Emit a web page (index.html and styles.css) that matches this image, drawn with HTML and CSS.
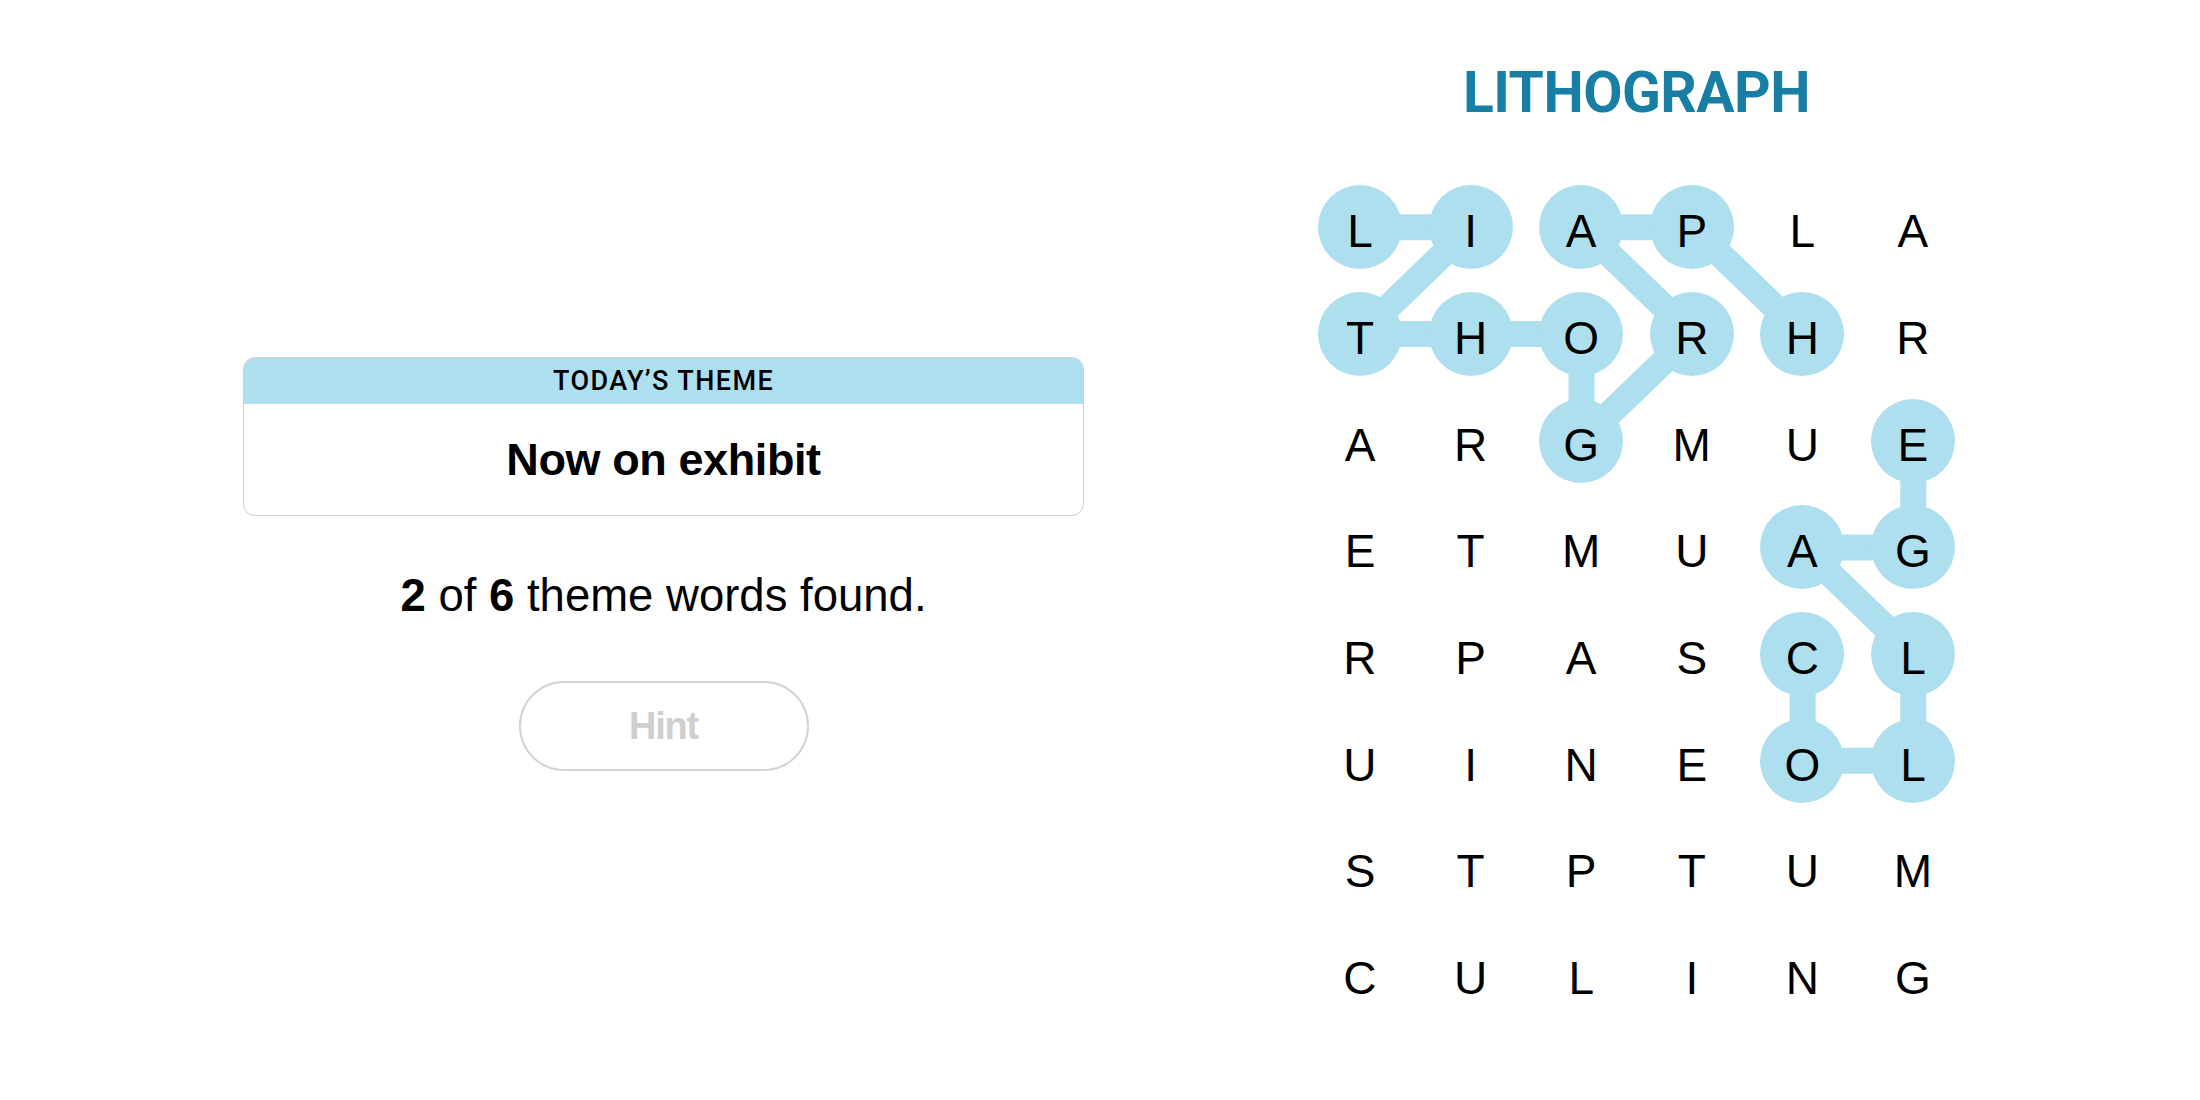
FILE: index.html
```html
<!DOCTYPE html>
<html lang="en">
<head>
  <meta charset="UTF-8">
  <title>Strands</title>
  <link rel="stylesheet" href="styles.css">
</head>
<body>
  <main class="game">
    <section class="info">
      <div class="theme-card">
        <div class="theme-label">TODAY’S THEME</div>
        <div class="theme-text">Now on exhibit</div>
      </div>
      <p class="progress"><b>2</b> of <b>6</b> theme words found.</p>
      <button class="hint" disabled>Hint</button>
    </section>

    <section class="puzzle">
      <h1 class="found-word">LITHOGRAPH</h1>
      <div class="board">
        <svg class="paths" width="663.6" height="853.6" viewBox="0 0 663.6 853.6">
          <polyline points="55.3,53.35 165.9,53.35 55.3,160.05 165.9,160.05 276.5,160.05 276.5,266.75 387.1,160.05 276.5,53.35 387.1,53.35 497.7,160.05"/>
          <polyline points="497.7,480.15 497.7,586.85 608.3,586.85 608.3,480.15 497.7,373.45 608.3,373.45 608.3,266.75"/>
        </svg>
        <div class="grid">
          <div class="cell"><span class="letter found">L</span></div>
          <div class="cell"><span class="letter found">I</span></div>
          <div class="cell"><span class="letter found">A</span></div>
          <div class="cell"><span class="letter found">P</span></div>
          <div class="cell"><span class="letter">L</span></div>
          <div class="cell"><span class="letter">A</span></div>

          <div class="cell"><span class="letter found">T</span></div>
          <div class="cell"><span class="letter found">H</span></div>
          <div class="cell"><span class="letter found">O</span></div>
          <div class="cell"><span class="letter found">R</span></div>
          <div class="cell"><span class="letter found">H</span></div>
          <div class="cell"><span class="letter">R</span></div>

          <div class="cell"><span class="letter">A</span></div>
          <div class="cell"><span class="letter">R</span></div>
          <div class="cell"><span class="letter found">G</span></div>
          <div class="cell"><span class="letter">M</span></div>
          <div class="cell"><span class="letter">U</span></div>
          <div class="cell"><span class="letter found">E</span></div>

          <div class="cell"><span class="letter">E</span></div>
          <div class="cell"><span class="letter">T</span></div>
          <div class="cell"><span class="letter">M</span></div>
          <div class="cell"><span class="letter">U</span></div>
          <div class="cell"><span class="letter found">A</span></div>
          <div class="cell"><span class="letter found">G</span></div>

          <div class="cell"><span class="letter">R</span></div>
          <div class="cell"><span class="letter">P</span></div>
          <div class="cell"><span class="letter">A</span></div>
          <div class="cell"><span class="letter">S</span></div>
          <div class="cell"><span class="letter found">C</span></div>
          <div class="cell"><span class="letter found">L</span></div>

          <div class="cell"><span class="letter">U</span></div>
          <div class="cell"><span class="letter">I</span></div>
          <div class="cell"><span class="letter">N</span></div>
          <div class="cell"><span class="letter">E</span></div>
          <div class="cell"><span class="letter found">O</span></div>
          <div class="cell"><span class="letter found">L</span></div>

          <div class="cell"><span class="letter">S</span></div>
          <div class="cell"><span class="letter">T</span></div>
          <div class="cell"><span class="letter">P</span></div>
          <div class="cell"><span class="letter">T</span></div>
          <div class="cell"><span class="letter">U</span></div>
          <div class="cell"><span class="letter">M</span></div>

          <div class="cell"><span class="letter">C</span></div>
          <div class="cell"><span class="letter">U</span></div>
          <div class="cell"><span class="letter">L</span></div>
          <div class="cell"><span class="letter">I</span></div>
          <div class="cell"><span class="letter">N</span></div>
          <div class="cell"><span class="letter">G</span></div>
        </div>
      </div>
    </section>
  </main>
</body>
</html>
```

FILE: styles.css
```css
body {
  margin: 0;
  background: #fff;
  color: #000;
  font-family: "Liberation Sans", Arial, sans-serif;
}
.game {
  display: flex;
  align-items: flex-start;
  gap: 220.7px;
  padding-left: 243px;
  height: 100vh;
  box-sizing: border-box;
}

/* left side */
.info {
  width: 841px;
  margin-top: 357px;
  display: flex;
  flex-direction: column;
  align-items: center;
}
.theme-card {
  width: 100%;
  border: 1px solid #cfcfcf;
  border-radius: 12px;
  overflow: hidden;
  box-sizing: border-box;
}
.theme-label {
  height: 47px;
  margin: -1px -1px 0;
  background: #aedfee;
  display: flex;
  align-items: center;
  justify-content: center;
  font-family: Roboto, "Liberation Sans", sans-serif;
  font-weight: 500;
  font-size: 27px;
  letter-spacing: 1.4px;
}
.theme-text {
  height: 111px;
  display: flex;
  align-items: center;
  justify-content: center;
  font-weight: bold;
  font-size: 45px;
  letter-spacing: -0.4px;
}
.progress {
  margin: 53px 0 0;
  font-size: 45.5px;
  line-height: 54px;
}
.hint {
  margin-top: 58px;
  width: 290px;
  height: 90px;
  border: 2px solid #d3d3d3;
  border-radius: 45px;
  background: #fff;
  color: #cfcfcf;
  font-family: "Liberation Sans", Arial, sans-serif;
  font-weight: bold;
  font-size: 38px;
  letter-spacing: -1.2px;
}

/* right side */
.puzzle {
  width: 663.6px;
  margin-top: 64px;
}
.found-word {
  margin: 0 0 53px;
  text-align: center;
  font-family: Roboto, "Liberation Sans", sans-serif;
  font-weight: 700;
  font-size: 57px;
  line-height: 57px;
  letter-spacing: -0.5px;
  color: #187ea3;
}
.board {
  position: relative;
  width: 663.6px;
  height: 853.6px;
}
.paths {
  position: absolute;
  top: 0;
  left: 0;
}
.paths polyline {
  fill: none;
  stroke: #aedfee;
  stroke-width: 26;
  stroke-linejoin: round;
}
.grid {
  position: relative;
  display: grid;
  grid-template-columns: repeat(6, 110.6px);
  grid-template-rows: repeat(8, 106.7px);
}
.cell {
  display: flex;
  align-items: center;
  justify-content: center;
}
.letter {
  width: 84px;
  height: 84px;
  padding-top: 8px;
  box-sizing: border-box;
  border-radius: 50%;
  display: flex;
  align-items: center;
  justify-content: center;
  font-size: 46px;
}
.letter.found {
  background: #aedfee;
}
```
